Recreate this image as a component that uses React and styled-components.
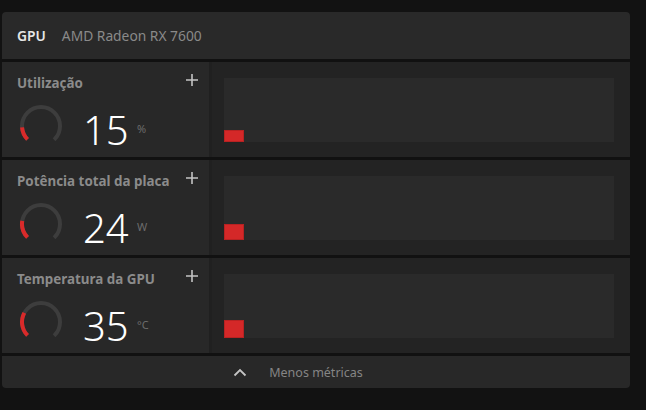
import styled, { createGlobalStyle } from "styled-components";

const GlobalStyle = createGlobalStyle`
  html, body {
    margin: 0;
    padding: 0;
    background: #121212;
  }
  * {
    box-sizing: border-box;
  }
`;

const Page = styled.div`
  padding: 12px 16px 0 2px;
  font-family: "Noto Sans", "Open Sans", sans-serif;
`;

const Panel = styled.section`
  width: 628px;
  display: flex;
  flex-direction: column;
  gap: 3px;
  background: #111111;
  border-radius: 4px;
  overflow: hidden;
`;

const Header = styled.header`
  height: 47px;
  background: #292929;
  display: flex;
  align-items: center;
  gap: 16px;
  padding-left: 15px;
  font-size: 13.8px;
`;

const Kind = styled.span`
  color: #e6e6e6;
  font-weight: 600;
`;

const Model = styled.span`
  color: #8a8a8a;
`;

const Row = styled.div`
  height: 95px;
  display: flex;
`;

const Cell = styled.div`
  width: 207px;
  background: #282828;
  padding: 12px 10px 0 15px;
  display: flex;
  flex-direction: column;
`;

const CellTop = styled.div`
  display: flex;
  justify-content: space-between;
  align-items: flex-start;
`;

const Label = styled.span`
  color: #8b8b8b;
  font-size: 13.4px;
  font-weight: 700;
  line-height: 18px;
`;

const AddButton = styled.button`
  border: none;
  background: none;
  padding: 0;
  margin-top: -1px;
  width: 14px;
  height: 14px;
  display: flex;
  cursor: pointer;
`;

const Reading = styled.div`
  display: flex;
  align-items: center;
  margin-top: 8px;
  padding-left: 2px;
`;

const Value = styled.span`
  color: #ffffff;
  font-size: 40px;
  font-weight: 300;
  line-height: 44px;
  margin-left: 20px;
  margin-top: 8px;
  min-width: 52px;
`;

const Unit = styled.span`
  color: #6c6c6c;
  font-size: 11px;
  margin-left: 2px;
  margin-top: 4px;
`;

const Graph = styled.div`
  flex: 1;
  background: #232323;
  border-left: 3px solid #202020;
  padding: 16px 16px 15px 12px;
  display: flex;
`;

const Plot = styled.div`
  flex: 1;
  background: #2a2a2a;
  display: flex;
  align-items: flex-end;
`;

const Bar = styled.div`
  width: 20px;
  background: #d42828;
  box-shadow: inset 0 0 0 1px #b82222;
`;

const Footer = styled.footer`
  height: 32px;
  background: #282828;
  display: flex;
  align-items: center;
  justify-content: center;
  gap: 22px;
  padding-right: 36px;
  color: #858585;
  font-size: 12.5px;
`;

const Gauge = ({ fraction }) => {
  const arc = 2 * Math.PI * 19 * 0.75;
  return (
    <svg width="44" height="44" viewBox="0 0 44 44">
      <g transform="rotate(135 22 22)" fill="none" strokeWidth="4">
        <circle cx="22" cy="22" r="19" stroke="#3d3d3d" strokeDasharray={`${arc} 200`} />
        <circle cx="22" cy="22" r="19" stroke="#d92a2a" strokeDasharray={`${arc * fraction} 200`} />
      </g>
    </svg>
  );
};

const Plus = () => (
  <svg width="14" height="14" viewBox="0 0 14 14">
    <path d="M7 1v12M1 7h12" stroke="#c4c4c4" strokeWidth="1.6" />
  </svg>
);

const Chevron = () => (
  <svg width="14" height="9" viewBox="0 0 14 9">
    <path d="M1.5 7.5L7 2l5.5 5.5" stroke="#c4c4c4" strokeWidth="1.8" fill="none" />
  </svg>
);

const metrics = [
  { label: "Utilização", value: 15, unit: "%", fraction: 0.15, bar: 12 },
  { label: "Potência total da placa", value: 24, unit: "W", fraction: 0.2, bar: 16 },
  { label: "Temperatura da GPU", value: 35, unit: "°C", fraction: 0.27, bar: 18 },
];

const App = () => (
  <Page>
    <GlobalStyle />
    <Panel>
      <Header>
        <Kind>GPU</Kind>
        <Model>AMD Radeon RX 7600</Model>
      </Header>
      {metrics.map((m) => (
        <Row key={m.label}>
          <Cell>
            <CellTop>
              <Label>{m.label}</Label>
              <AddButton aria-label="Adicionar">
                <Plus />
              </AddButton>
            </CellTop>
            <Reading>
              <Gauge fraction={m.fraction} />
              <Value>{m.value}</Value>
              <Unit>{m.unit}</Unit>
            </Reading>
          </Cell>
          <Graph>
            <Plot>
              <Bar style={{ height: m.bar }} />
            </Plot>
          </Graph>
        </Row>
      ))}
      <Footer>
        <Chevron />
        <span>Menos métricas</span>
      </Footer>
    </Panel>
  </Page>
);

export default App;
